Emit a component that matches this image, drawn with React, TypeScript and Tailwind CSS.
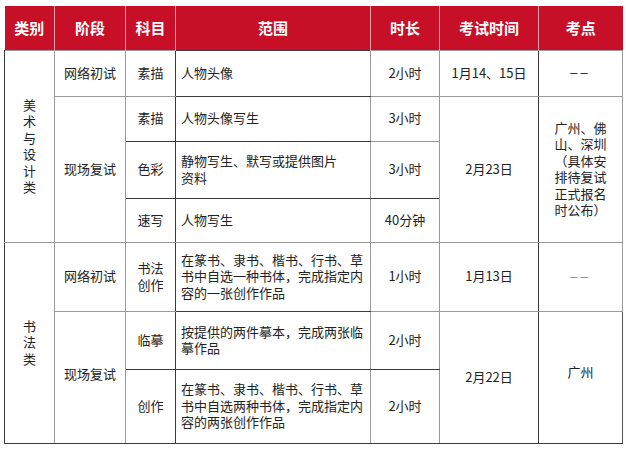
import React from "react";

const dark = "border-[#3a3a3a]";
const grey = "border-[#9a9a9a]";

const Cell: React.FC<{
  children?: React.ReactNode;
  rowSpan?: number;
  className?: string;
}> = ({ children, rowSpan, className = "" }) => (
  <td
    rowSpan={rowSpan}
    className={`border align-middle text-center px-1 ${className}`}
  >
    {children}
  </td>
);

const Lines: React.FC<{ lines: string[]; className?: string }> = ({ lines, className = "" }) => (
  <div className={className}>
    {lines.map((l, i) => (
      <div key={i}>{l}</div>
    ))}
  </div>
);

const Dashes: React.FC<{ className?: string }> = ({ className = "" }) => (
  <span
    className={`tracking-[3px] ${className}`}
    style={{ fontFamily: '"Liberation Sans", sans-serif' }}
  >
    ––
  </span>
);

export default function App() {
  const headers = ["类别", "阶段", "科目", "范围", "时长", "考试时间", "考点"];

  return (
    <div
      className="w-[626px] h-[449px] bg-white pl-[4px] pt-[6px]"
      style={{ fontFamily: '"Noto Sans CJK SC", "Noto Sans", sans-serif' }}
    >
      <table className="table-fixed border-collapse w-[618px] text-[13px] leading-[16.5px] text-[#222]">
        <colgroup>
          <col className="w-[50px]" />
          <col className="w-[71px]" />
          <col className="w-[50px]" />
          <col className="w-[195px]" />
          <col className="w-[69px]" />
          <col className="w-[99px]" />
          <col className="w-[84px]" />
        </colgroup>
        <thead>
          <tr className="h-[44px] bg-[#c70f27] text-white">
            {headers.map((h, i) => (
              <th
                key={h}
                className={`text-[15px] font-bold text-center align-middle border-[#c70f27] ${
                  i > 0 ? "border-l border-l-[#e8a0a8]" : ""
                }`}
              >
                {h}
              </th>
            ))}
          </tr>
        </thead>
        <tbody>
          {/* 美术与设计类 */}
          <tr className="h-[46px]">
            <Cell rowSpan={4} className={`${grey} border-l-[#3a3a3a]`}>
              <Lines lines={["美", "术", "与", "设", "计", "类"]} />
            </Cell>
            <Cell className={grey}>网络初试</Cell>
            <Cell className={`${grey} border-r-[#3a3a3a]`}>素描</Cell>
            <Cell className={`${dark} border-r-[#9a9a9a] text-left pl-[5px]`}>人物头像</Cell>
            <Cell className={grey}>2小时</Cell>
            <Cell className={`${grey} border-r-[#3a3a3a]`}>1月14、15日</Cell>
            <Cell className={`${grey} border-l-[#3a3a3a]`}>
              <Dashes />
            </Cell>
          </tr>
          <tr className="h-[45px]">
            <Cell rowSpan={3} className={grey}>现场复试</Cell>
            <Cell className={`${dark} border-l-[#9a9a9a]`}>素描</Cell>
            <Cell className={`${dark} border-r-[#9a9a9a] text-left pl-[5px]`}>人物头像写生</Cell>
            <Cell className={`${grey}`}>3小时</Cell>
            <Cell rowSpan={3} className={`${grey} border-r-[#3a3a3a]`}>2月23日</Cell>
            <Cell rowSpan={3} className={`${grey} border-l-[#3a3a3a]`}>
              <Lines
                className="inline-block text-left"
                lines={["广州、佛", "山、深圳", "（具体安", "排待复试", "正式报名", "时公布）"]}
              />
            </Cell>
          </tr>
          <tr className="h-[57px]">
            <Cell className={`${dark} border-l-[#9a9a9a]`}>色彩</Cell>
            <Cell className={`${dark} border-r-[#9a9a9a] text-left pl-[5px]`}>
              <Lines lines={["静物写生、默写或提供图片", "资料"]} />
            </Cell>
            <Cell className={`${dark} border-l-[#9a9a9a] border-r-[#9a9a9a]`}>3小时</Cell>
          </tr>
          <tr className="h-[44px]">
            <Cell className={`${dark} border-l-[#9a9a9a] border-b-[#9a9a9a]`}>速写</Cell>
            <Cell className={`${dark} border-r-[#9a9a9a] border-b-[#9a9a9a] text-left pl-[5px]`}>人物写生</Cell>
            <Cell className={`${grey}`}>40分钟</Cell>
          </tr>

          {/* 书法类 */}
          <tr className="h-[69px]">
            <Cell rowSpan={3} className={`${grey} border-l-[#3a3a3a] border-b-[#3a3a3a]`}>
              <Lines lines={["书", "法", "类"]} />
            </Cell>
            <Cell className={grey}>网络初试</Cell>
            <Cell className={`${grey} border-r-[#3a3a3a]`}>
              <Lines lines={["书法", "创作"]} />
            </Cell>
            <Cell className={`${dark} border-r-[#9a9a9a] border-t-[#9a9a9a] text-left pl-[5px]`}>
              <Lines
                lines={["在篆书、隶书、楷书、行书、草", "书中自选一种书体，完成指定内", "容的一张创作作品"]}
              />
            </Cell>
            <Cell className={grey}>1小时</Cell>
            <Cell className={`${grey} border-r-[#3a3a3a]`}>1月13日</Cell>
            <Cell className={`${grey} border-l-[#3a3a3a]`}>
              <Dashes className="text-[#888]" />
            </Cell>
          </tr>
          <tr className="h-[58px]">
            <Cell rowSpan={2} className={`${dark} border-l-[#9a9a9a] border-r-[#9a9a9a]`}>
              <div className="-mt-[5px]">现场复试</div>
            </Cell>
            <Cell className={`${dark}`}>临摹</Cell>
            <Cell className={`${dark} border-r-[#9a9a9a] text-left pl-[5px]`}>
              <Lines lines={["按提供的两件摹本，完成两张临", "摹作品"]} />
            </Cell>
            <Cell className={`${dark} border-l-[#9a9a9a] border-r-[#9a9a9a]`}>2小时</Cell>
            <Cell rowSpan={2} className={`${dark} border-l-[#9a9a9a]`}>2月22日</Cell>
            <Cell rowSpan={2} className={`${dark} border-r-[#555]`}>
              <div className="-mt-[10px]">广州</div>
            </Cell>
          </tr>
          <tr className="h-[74px]">
            <Cell className={`${dark} border-t-[#555]`}>创作</Cell>
            <Cell className={`${dark} border-r-[#9a9a9a] text-left pl-[5px]`}>
              <Lines
                lines={["在篆书、隶书、楷书、行书、草", "书中自选两种书体，完成指定内", "容的两张创作作品"]}
              />
            </Cell>
            <Cell className={`${dark} border-l-[#9a9a9a] border-r-[#9a9a9a] border-t-[#555]`}>2小时</Cell>
          </tr>
        </tbody>
      </table>
    </div>
  );
}
